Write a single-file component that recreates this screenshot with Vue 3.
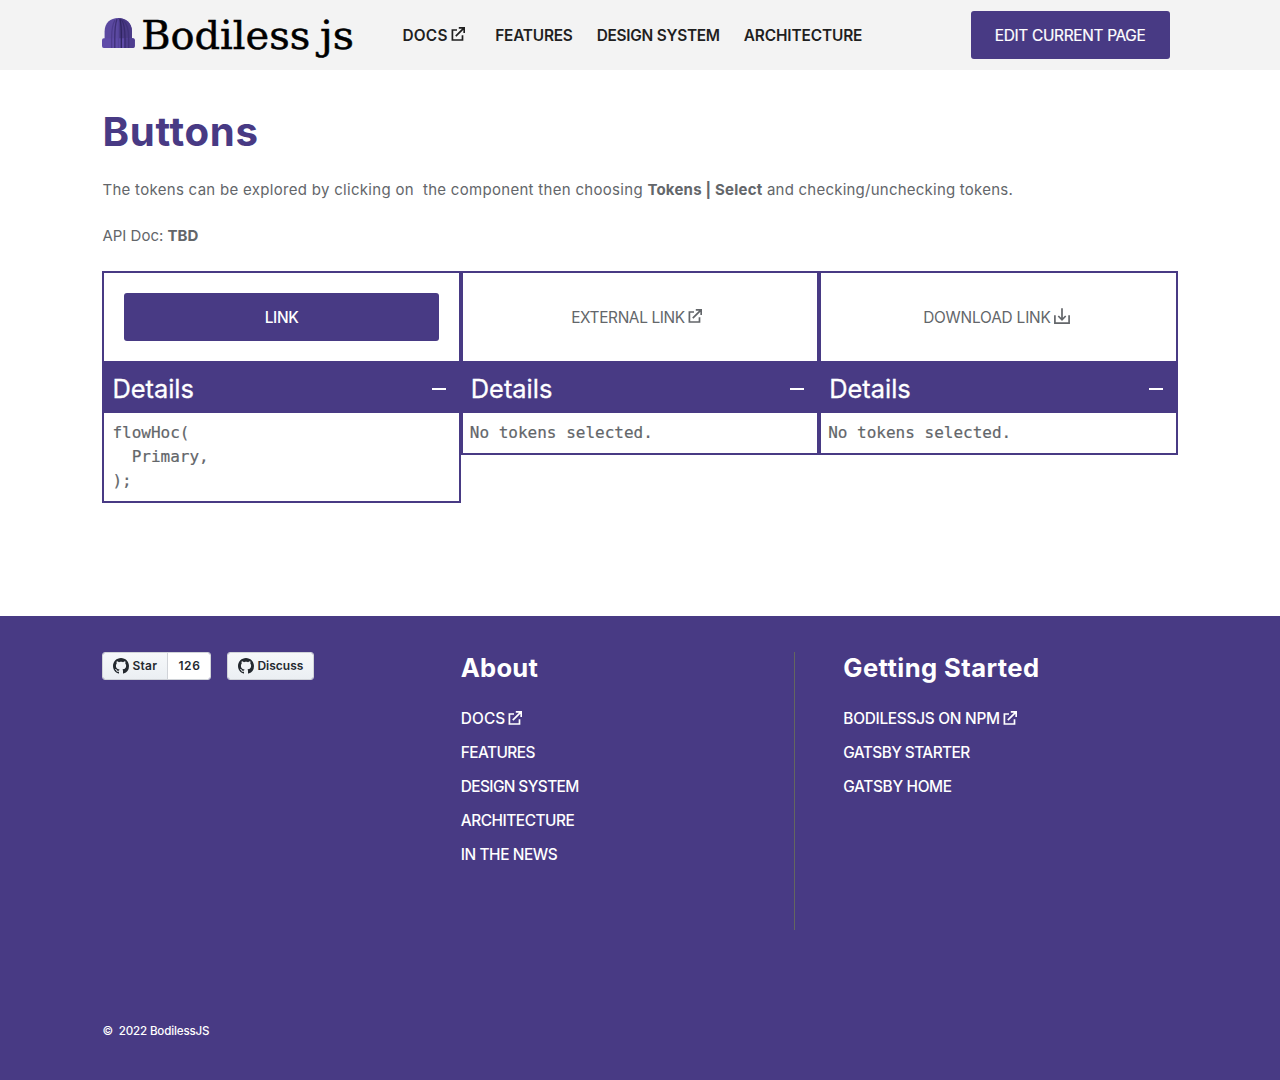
<script setup>
const nav = [
  { label: 'DOCS', external: true, tracking: 0.25 },
  { label: 'FEATURES', tracking: -0.2 },
  { label: 'DESIGN SYSTEM', tracking: -0.26 },
  { label: 'ARCHITECTURE', tracking: -0.12 },
]

const cards = [
  { kind: 'primary', label: 'LINK', tracking: -0.38, code: 'flowHoc(\n  Primary,\n);' },
  { kind: 'external', label: 'EXTERNAL LINK', tracking: -0.36, code: 'No tokens selected.' },
  { kind: 'download', label: 'DOWNLOAD LINK', tracking: -0.19, code: 'No tokens selected.' },
]

const about = [
  { label: 'DOCS', external: true, tracking: 0.1 },
  { label: 'FEATURES', tracking: -0.56 },
  { label: 'DESIGN SYSTEM', tracking: -0.6 },
  { label: 'ARCHITECTURE', tracking: -0.47 },
  { label: 'IN THE NEWS', tracking: -0.42 },
]

const started = [
  { label: 'BODILESSJS ON NPM', external: true, tracking: -0.27 },
  { label: 'GATSBY STARTER', tracking: -0.58 },
  { label: 'GATSBY HOME', tracking: -0.34 },
]

const spacing = (item) => ({ letterSpacing: item.tracking + 'px' })

const mark =
  'M8 0C3.58 0 0 3.58 0 8c0 3.54 2.29 6.53 5.47 7.59.4.07.55-.17.55-.38 0-.19-.01-.82-.01-1.49-2.01.37-2.53-.49-2.69-.94-.09-.23-.48-.94-.82-1.13-.28-.15-.68-.52-.01-.53.63-.01 1.08.58 1.23.82.72 1.21 1.87.87 2.33.66.07-.52.28-.87.51-1.07-1.78-.2-3.64-.89-3.64-3.95 0-.87.31-1.59.82-2.15-.08-.2-.36-1.02.08-2.12 0 0 .67-.21 2.2.82.64-.18 1.32-.27 2-.27s1.36.09 2 .27c1.53-1.04 2.2-.82 2.2-.82.44 1.1.16 1.92.08 2.12.51.56.82 1.27.82 2.15 0 3.07-1.87 3.75-3.65 3.95.29.25.54.73.54 1.48 0 1.07-.01 1.93-.01 2.2 0 .21.15.46.55.38A8.01 8.01 0 0 0 16 8c0-4.42-3.58-8-8-8z'
</script>

<template>
  <div class="page">
    <header class="header">
      <div class="container header-row">
        <a class="logo">
          <svg width="256" height="48" viewBox="0 0 256 48">
            <path d="M2.6 29V20.5C2.6 12 8.3 7 16.2 7S30 12 30 20.5V29Z" fill="#5b49a0" />
            <path d="M16.2 7C22 7 30 11 30 20.5V29H16Z" fill="#4a3a86" />
            <path d="M1.8 27.2H30.8Q32.8 27.2 32.8 29.2V35Q32.8 37 30.8 37H1.8Q0 37 0 35V29.2Q0 27.2 1.8 27.2Z" fill="#5f4ba8" />
            <path d="M22.5 27.2H30.8Q32.8 27.2 32.8 29.2V35Q32.8 37 30.8 37H22.5Z" fill="#4e3d8f" />
            <g fill="none" stroke="#2f2560" stroke-width="1.3">
              <path d="M13 9Q9.6 15 9.6 27V37" stroke="#4c3b8c" />
              <path d="M15 8Q12.8 14 12.8 27V37" stroke="#3d2f75" />
              <path d="M16.5 8V37" stroke="#55439a" />
              <path d="M18 8Q19.5 14 19.3 27V37" />
              <path d="M19.5 8.5Q23 14 23 27V37" stroke="#382b6d" />
              <path d="M21 9Q26.7 14 26.7 27V37" stroke="#40327a" />
            </g>
            <text x="39.2" y="37.8" textLength="169" lengthAdjust="spacingAndGlyphs">Bodiless</text>
            <text x="218" y="37.8" textLength="34" lengthAdjust="spacingAndGlyphs">js</text>
          </svg>
        </a>
        <nav class="nav">
          <a v-for="item in nav" :key="item.label" class="nav-link">
            <span :style="spacing(item)">{{ item.label }}</span>
            <svg v-if="item.external" class="ext" viewBox="0 0 14 14">
              <path d="M6 3H1.4V13H11.5V8.2M4.8 9.2L12.6 1.3M7.8 .9H13.2V6" />
            </svg>
          </a>
        </nav>
        <a class="button edit">EDIT CURRENT PAGE</a>
      </div>
    </header>

    <main class="container main">
      <h1>Buttons</h1>
      <p class="intro">The tokens can be explored by clicking on&nbsp; the component then choosing <b>Tokens | Select</b> <span class="tail">and checking/unchecking tokens.</span></p>
      <p class="api">API Doc: <b>TBD</b></p>
      <section class="cards">
        <article v-for="card in cards" :key="card.label" class="card">
          <div class="sample">
            <a v-if="card.kind === 'primary'" class="button wide" :style="spacing(card)">{{ card.label }}</a>
            <a v-else class="plain" :class="card.kind">
              <span :style="spacing(card)">{{ card.label }}</span>
              <svg v-if="card.kind === 'external'" class="ext" viewBox="0 0 14 14">
                <path d="M6 3H1.4V13H11.5V8.2M4.8 9.2L12.6 1.3M7.8 .9H13.2V6" />
              </svg>
              <svg v-else class="down" viewBox="0 0 16 16">
                <path d="M.9 7.2V15.2H15.1V7.2M8 .2V11.6M4.3 8L8 11.8L11.7 8" />
              </svg>
            </a>
          </div>
          <div class="details"><span>Details</span><i class="minus"></i></div>
          <pre class="code" :class="{ inset: card.kind === 'primary' }">{{ card.code }}</pre>
        </article>
      </section>
    </main>

    <footer class="footer">
      <div class="container">
        <div class="columns">
          <div class="social">
            <div class="gh">
              <a class="gh-btn"><svg viewBox="0 0 16 16"><path :d="mark" /></svg><span class="star">Star</span></a>
              <a class="gh-count">126</a>
            </div>
            <div class="gh">
              <a class="gh-btn"><svg viewBox="0 0 16 16"><path :d="mark" /></svg><span>Discuss</span></a>
            </div>
          </div>
          <div class="col about">
            <h2>About</h2>
            <a v-for="item in about" :key="item.label" class="foot-link">
              <span :style="spacing(item)">{{ item.label }}</span>
              <svg v-if="item.external" class="ext" viewBox="0 0 14 14">
                <path d="M6 3H1.4V13H11.5V8.2M4.8 9.2L12.6 1.3M7.8 .9H13.2V6" />
              </svg>
            </a>
          </div>
          <div class="col started">
            <h2 class="loose">Getting Started</h2>
            <a v-for="item in started" :key="item.label" class="foot-link">
              <span :style="spacing(item)">{{ item.label }}</span>
              <svg v-if="item.external" class="ext" viewBox="0 0 14 14">
                <path d="M6 3H1.4V13H11.5V8.2M4.8 9.2L12.6 1.3M7.8 .9H13.2V6" />
              </svg>
            </a>
          </div>
        </div>
        <p class="copy">©&nbsp; 2022 BodilessJS</p>
      </div>
    </footer>
  </div>
</template>

<style>
body {
  background: #fff;
}
</style>

<style scoped>
.page {
  min-height: 1080px;
  display: flex;
  flex-direction: column;
  font-family: Inter, "Liberation Sans", sans-serif;
  font-size: 15.4px;
  line-height: 24px;
  color: #63666a;
}
.page * {
  box-sizing: border-box;
}
.container {
  width: 84%;
  margin: 0 auto;
}
.header {
  height: 70px;
  background: #f3f3f3;
}
.header-row {
  display: flex;
  align-items: center;
  height: 70px;
}
.logo svg {
  display: block;
}
.logo {
  width: 300px;
  flex: none;
}
.logo text {
  font: 40px "DejaVu Serif", serif;
  fill: #000;
  stroke: #000;
  stroke-width: 0.5;
}
.nav {
  display: flex;
  flex: 1;
}
.nav-link {
  display: flex;
  align-items: center;
  margin-right: 24px;
  font-weight: 600;
  color: #1f1f1f;
  white-space: nowrap;
}
.nav-link:first-child {
  margin-right: 30.5px;
}
.nav-link span,
.plain span {
  padding-top: 1px;
}
.ext {
  width: 14px;
  height: 14px;
  margin: 0 0 2px 3px;
  fill: none;
  stroke: currentColor;
  stroke-width: 1.7;
}
.down {
  width: 16px;
  height: 16px;
  margin: 0 0 3px 3px;
  fill: none;
  stroke: currentColor;
  stroke-width: 1.7;
}
.button {
  display: flex;
  align-items: center;
  justify-content: center;
  height: 48px;
  border-radius: 3px;
  background: #483a84;
  color: #fff;
  white-space: nowrap;
  padding-top: 1px;
}
.edit {
  width: 199px;
  margin-right: 8px;
  letter-spacing: -0.3px;
  -webkit-text-stroke: 0.2px #fff;
}
.main {
  height: 546px;
}
h1 {
  margin: 32px 0 0;
  font-size: 40.2px;
  line-height: 60px;
  font-weight: 700;
  letter-spacing: 0.7px;
  color: #483a84;
}
p {
  margin: 0;
  font-size: 15px;
  white-space: nowrap;
}
.intro {
  margin-top: 16px;
  letter-spacing: 0.3px;
}
.intro b {
  letter-spacing: 0.21px;
}
.tail {
  letter-spacing: 0.23px;
}
.api {
  margin-top: 22px;
}
.cards {
  display: flex;
  align-items: flex-start;
  margin-top: 23px;
}
.card {
  flex: 1;
  border: 2px solid #483a84;
}
.sample {
  height: 88px;
  padding: 20px;
}
.wide {
  font-weight: 500;
}
.plain {
  display: flex;
  align-items: center;
  justify-content: center;
  height: 48px;
  padding-right: 4px;
}
.external {
  padding-right: 7px;
}
.details {
  display: flex;
  align-items: center;
  justify-content: space-between;
  height: 52px;
  padding: 4px 13px 0 8px;
  background: #483a84;
  color: #fff;
  font-size: 25.4px;
  -webkit-text-stroke: 0.3px #fff;
}
.minus {
  width: 14px;
  height: 2px;
  background: #fff;
}
.code {
  margin: 0;
  padding: 8px 7px;
  font: 16px/24px "DejaVu Sans Mono", monospace;
  -webkit-text-stroke: 0.2px #63666a;
}
.inset {
  padding-left: 8px;
}
.footer {
  flex: 1;
  background: #483a84;
  color: #fff;
}
.columns {
  display: flex;
  height: 314px;
  padding-top: 36px;
}
.social {
  display: flex;
  width: 358.4px;
  gap: 16px;
}
.gh {
  display: flex;
  height: 28px;
  border: 1px solid #d0d3d8;
  border-radius: 3px;
  overflow: hidden;
  font-size: 12px;
  font-weight: 600;
  line-height: 26px;
  color: #24292f;
}
.gh-btn {
  display: flex;
  align-items: center;
  padding: 0 10px;
  background: linear-gradient(180deg, #f6f8fa, #ebeff3);
}
.gh-btn svg {
  width: 16px;
  height: 16px;
  margin-right: 3px;
  fill: currentColor;
}
.star {
  letter-spacing: 0.3px;
}
.gh-count {
  padding: 0 10px;
  border-left: 1px solid #d0d3d8;
  background: #fff;
  letter-spacing: 0.6px;
}
.about {
  width: 334px;
  border-right: 1px solid #63665f;
}
.started {
  padding-left: 48.5px;
}
h2 {
  margin: 0 0 23px;
  font-size: 25.6px;
  line-height: 32px;
  font-weight: 700;
  letter-spacing: 0.2px;
}
h2.loose {
  letter-spacing: 0.42px;
}
.foot-link {
  display: flex;
  align-items: center;
  height: 24px;
  margin-bottom: 10px;
  font-weight: 500;
}
.copy {
  margin-top: 89px;
  font-size: 11.6px;
  font-weight: 500;
  letter-spacing: -0.16px;
}
</style>
